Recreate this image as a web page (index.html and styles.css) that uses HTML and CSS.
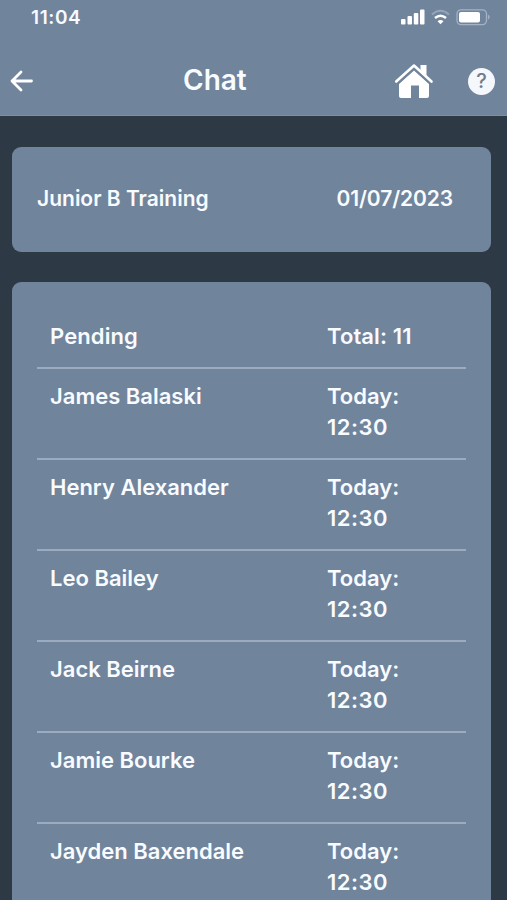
FILE: index.html
```html
<!DOCTYPE html>
<html lang="en">
<head>
    <meta charset="UTF-8">
    <meta name="viewport" content="width=device-width, initial-scale=1.0">
    <link rel="stylesheet" href="styles.css">
    <title>Chat</title>
</head>
<body>
    <header>
        <div class="status-bar">
            <span class="time">11:04</span>
            <svg class="status-icons" width="90" height="18" viewBox="0 0 90 18">
                <g fill="#fff">
                    <rect x="1" y="11" width="4.5" height="5.500" rx="1"/>
                    <rect x="7.5" y="8" width="4.500" height="8.500" rx="1"/>
                    <rect x="13.8" y="5" width="4.500" height="11.500" rx="1"/>
                    <rect x="20" y="1.500" width="4.500" height="15" rx="1"/>
                    <path d="M37.500 13.200Q40.500 11 43.500 13.200L40.500 16.200Z"/>
                    <rect x="59" y="4" width="21" height="10.500" rx="2"/>
                </g>
                <path d="M35 10Q40.500 5.600 46 10" fill="none" stroke="#fff" stroke-width="2.500"/>
                <path d="M32 6.500Q40.500 -1 49 6.500" fill="none" stroke="#95a6bb" stroke-width="2"/>
                <rect x="57" y="1.800" width="29.500" height="14.800" rx="4" fill="none" stroke="#a3b2c5" stroke-width="1.300"/>
                <path d="M88 6.500Q91.500 9 88 11.800Z" fill="#a3b2c5"/>
            </svg>
        </div>
        <nav class="nav-bar">
            <svg class="back" width="24" height="22" viewBox="0 0 24 22" fill="none" stroke="#fff" stroke-width="2.800" stroke-linecap="round" stroke-linejoin="round">
                <path d="M21.500 11H2M11 2L2 11L11 20"/>
            </svg>
            <h1>Chat</h1>
            <svg class="home" width="40" height="38" viewBox="0 0 40 38" fill="#fff">
                <path d="M20 8.500L35 22V34Q35 36 33 36H25V23.500H17V36H7Q5 36 5 34V22Z"/>
                <path d="M26.500 3H32.500V14L26.500 8.500Z"/>
                <path d="M2.200 19.500L20 3.500L37.500 19.500" fill="none" stroke="#fff" stroke-width="2.600" stroke-linecap="round" stroke-linejoin="round"/>
                <path d="M4.500 21L20 7L35.500 21" fill="none" stroke="#70849c" stroke-width="1.500"/>
            </svg>
            <span class="help">?</span>
        </nav>
    </header>

    <main>
        <section class="card session">
            <span>Junior B Training</span>
            <span class="date">01/07/2023</span>
        </section>

        <section class="card pending">
            <div class="row total"><span>Pending</span><span>Total: 11</span></div>
            <div class="row"><span>James Balaski</span><span>Today:<br><span class="hour">12:30</span></span></div>
            <div class="row"><span>Henry Alexander</span><span>Today:<br><span class="hour">12:30</span></span></div>
            <div class="row"><span>Leo Bailey</span><span>Today:<br><span class="hour">12:30</span></span></div>
            <div class="row"><span>Jack Beirne</span><span>Today:<br><span class="hour">12:30</span></span></div>
            <div class="row"><span>Jamie Bourke</span><span>Today:<br><span class="hour">12:30</span></span></div>
            <div class="row"><span>Jayden Baxendale</span><span>Today:<br><span class="hour">12:30</span></span></div>
        </section>
    </main>
</body>
</html>
```
FILE: styles.css
```css
:root {
    --background-color: #2d3945;
    --panel-color: #70849c;
    --line-color: #9babc0;
    --text-color: #f8fbff;
}

* {
    box-sizing: border-box;
}

body {
    display: flex;
    flex-direction: column;
    margin: 0;
    height: 100vh;
    overflow: hidden;
    font-family: Inter, 'Liberation Sans', sans-serif;
    font-weight: 600;
    background-color: var(--background-color);
    color: var(--text-color);
}

header {
    flex: none;
    height: 116px;
    background-color: var(--panel-color);
    border-bottom: 1px solid #7c8fa6;
}

.status-bar {
    display: flex;
    justify-content: space-between;
    height: 46px;
    padding: 8px 17px 0 31px;
}

.time {
    font-size: 19px;
    line-height: 19px;
    letter-spacing: 0.6px;
}

.nav-bar {
    display: flex;
    align-items: center;
    height: 70px;
    padding: 0 12px 0 10px;
}

h1 {
    margin: 0 0 3px 149px;
    width: 63px;
    font-size: 28px;
    font-weight: 600;
    line-height: 36px;
    white-space: nowrap;
}

.home {
    margin-left: 148px;
}

.help {
    width: 27px;
    height: 27px;
    margin-left: auto;
    border-radius: 50%;
    background-color: #f4f7fc;
    color: #707b8b;
    font-size: 20px;
    font-weight: 500;
    line-height: 27px;
    text-align: center;
}

main {
    display: flex;
    flex: 1;
    flex-direction: column;
    min-height: 0;
    padding: 31px 16px 0 12px;
}

.card {
    border-radius: 9px;
    background-color: var(--panel-color);
}

.session {
    display: flex;
    flex: none;
    align-items: center;
    justify-content: space-between;
    height: 105px;
    margin-bottom: 30px;
    padding: 0 38px 2px 25px;
    font-size: 21px;
}

.date {
    letter-spacing: -0.1px;
}

.pending {
    flex: 1;
    min-height: 0;
    padding: 26px 25px 0;
    overflow: hidden;
    border-radius: 9px 9px 0 0;
    font-size: 22px;
    line-height: 31px;
}

.row {
    display: grid;
    grid-template-columns: 277px 1fr;
    height: 91.1px;
    padding: 12.5px 0 0 13px;
    border-top: 2px solid var(--line-color);
}

.total {
    height: 58.5px;
    border-top: none;
    letter-spacing: 0.1px;
}

.hour {
    letter-spacing: 0.5px;
}
```
